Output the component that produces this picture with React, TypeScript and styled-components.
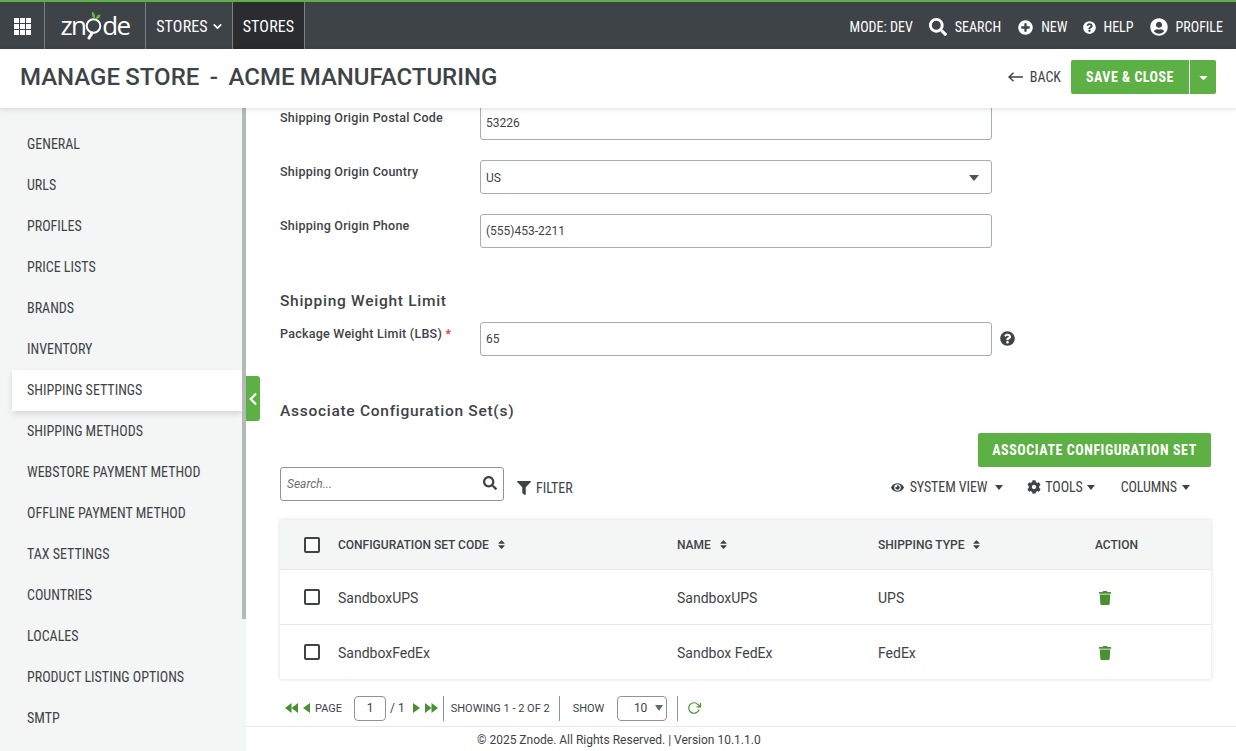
import React from "react";
import styled, { createGlobalStyle } from "styled-components";
import { FaSearch, FaPlusCircle, FaQuestionCircle, FaUserCircle, FaFilter, FaEye, FaCog, FaTrash, FaSort, FaChevronLeft, FaCaretDown } from "react-icons/fa";
import { FiChevronDown, FiRotateCw } from "react-icons/fi";

const Global = createGlobalStyle`
  html, body { margin: 0; padding: 0; height: 100%; background: #fff; }
  * { box-sizing: border-box; }
  body { font-family: Roboto, "Liberation Sans", sans-serif; color: #3e4347; }
`;

const Page = styled.div`display:flex;flex-direction:column;width:1236px;height:751px;overflow:hidden;position:relative;`;
const TopBar = styled.header`display:flex;align-items:stretch;height:49px;background:#3e4347;border-top:2px solid #5db043;color:#fff;flex:none;`;
const NavCell = styled.div<{ $w: number; $dark?: boolean; $pl?: number }>`
  width:${p => p.$w}px;display:flex;align-items:center;justify-content:center;gap:3px;padding:2px 0 0 ${p => p.$pl ?? 0}px;
  border-right:1px solid #7d8184;background:${p => (p.$dark ? "#2a2c30" : "transparent")};
  font-size:16px;
`;
const NavText = styled.span`font-stretch:75%;white-space:nowrap;`;
const NavLabel = styled(NavText)`letter-spacing:.15px;`;
const Logo = styled.div`display:flex;align-items:center;font-family:"Open Sans",sans-serif;font-weight:400;font-size:26px;letter-spacing:-1.6px;line-height:1;margin-top:-3px;`;
const TopRight = styled.div`margin-left:auto;display:flex;align-items:center;padding:3px 13px 0 0;font-size:14px;`;
const TopItem = styled.div<{ $gap: number; $ml: number }>`display:flex;align-items:center;gap:${p => p.$gap}px;margin-left:${p => p.$ml}px;`;

const TitleBar = styled.div`height:59px;flex:none;display:flex;align-items:center;padding:0 20px 3px;background:#fff;box-shadow:0 1px 5px rgba(0,0,0,.14);position:relative;z-index:2;`;
const Title = styled.h1`margin:0;font-size:24px;font-weight:500;color:#3e4347;word-spacing:-.7px;white-space:pre;`;
const TitleActions = styled.div`margin-left:auto;display:flex;align-items:center;`;
const Back = styled.div`display:flex;align-items:center;gap:7px;font-size:14px;color:#3e4347;margin-right:10px;`;
const SaveGroup = styled.div`display:flex;height:34px;background:#5db043;border-radius:2px;color:#fff;`;
const SaveMain = styled.div`width:119px;display:flex;align-items:center;justify-content:center;font-size:14px;font-weight:700;font-stretch:75%;letter-spacing:.5px;border-right:1px solid #fff;`;
const SaveCaret = styled.div`width:26px;display:flex;align-items:center;justify-content:center;font-size:13px;`;

const Body = styled.div`flex:1;display:flex;min-height:0;position:relative;`;
const Side = styled.nav`width:246px;flex:none;background:#f4f5f5;padding:16px 4px 0 12px;overflow:hidden;position:relative;`;
const SideThumb = styled.div`position:absolute;right:0;top:0;width:4px;height:511px;background:#b5b7b8;`;
const SideItem = styled.div<{ $active?: boolean }>`
  height:41px;display:flex;align-items:center;padding:0 0 1px 15px;font-size:14px;color:#3e4347;white-space:nowrap;
  ${p => p.$active ? "background:#fff;box-shadow:0 3px 6px rgba(0,0,0,.12);" : ""}
`;
const Toggle = styled.div`position:absolute;left:246px;top:268px;width:14px;height:45px;background:#5db043;border-radius:0 3px 3px 0;color:#fff;display:flex;align-items:center;justify-content:center;font-size:14px;z-index:3;`;

const MainCol = styled.main`flex:1;min-width:0;display:flex;flex-direction:column;`;
const Scroll = styled.div`flex:1;min-height:0;overflow:hidden;padding:0 25px 0 34px;`;
const Content = styled.div`margin-top:-2px;`;
const Row = styled.div`display:flex;height:34px;margin-bottom:20px;align-items:flex-start;`;
const Label = styled.label`width:200px;flex:none;font-size:12.5px;font-weight:500;letter-spacing:.25px;color:#3e4347;padding-top:4px;line-height:16px;`;
const Req = styled.span`color:#e53935;`;
const Field = styled.div<{ $select?: boolean }>`width:512px;height:34px;border:1px solid #a9adb0;border-radius:3px;font-size:12px;display:flex;align-items:center;padding:${p => (p.$select ? "1px" : "0")} 5px 0;color:#3e4347;background:#fff;position:relative;`;
const Caret = styled.span`margin-left:auto;margin-right:7px;width:0;height:0;border-left:5px solid transparent;border-right:5px solid transparent;border-top:6px solid #4d5357;`;
const Help = styled.div`margin:9px 0 0 8px;font-size:15px;color:#3e4347;line-height:0;`;
const Section = styled.h2<{ $mt: number; $mb: number }>`margin:${p => p.$mt}px 0 ${p => p.$mb}px;font-size:15.5px;font-weight:500;letter-spacing:.72px;line-height:18px;padding-top:1px;height:18px;color:#3e4347;`;
const RightBtnRow = styled.div`display:flex;justify-content:flex-end;`;
const GreenBtn = styled.div`width:233px;height:34px;background:#5db043;color:#fff;border-radius:2px;display:flex;align-items:center;justify-content:center;font-size:14px;font-weight:700;font-stretch:75%;letter-spacing:.55px;`;
const Toolbar = styled.div`display:flex;height:34px;align-items:center;margin-bottom:19px;`;
const SearchBox = styled.div`width:224px;height:34px;border:1px solid #8f9396;border-radius:3px;display:flex;align-items:center;padding:0 6px;font-size:12px;font-style:italic;color:#6c7175;justify-content:space-between;`;
const SearchIcon = styled.span`font-size:14px;color:#3e4347;line-height:0;font-style:normal;margin-top:-2px;`;
const FilterBtn = styled.div`display:flex;align-items:center;gap:5px;margin-left:13px;font-size:14px;color:#3e4347;padding-top:7px;`;
const ToolRight = styled.div`margin-left:auto;display:flex;align-items:center;font-size:14px;letter-spacing:-.1px;color:#3e4347;margin-right:21px;padding-top:6px;`;
const ToolItem = styled.div<{ $ml: number; $gap: number }>`display:flex;align-items:center;gap:${p => p.$gap}px;margin-left:${p => p.$ml}px;`;
const ToolCaret = styled.span<{ $ml?: number }>`width:0;height:0;margin-left:${p => p.$ml ?? 0}px;border-left:4px solid transparent;border-right:4px solid transparent;border-top:5px solid #3e4347;`;

const Table = styled.div`width:931px;box-shadow:0 0 4px rgba(0,0,0,.16);background:#fff;`;
const Grid = styled.div<{ $head?: boolean }>`
  display:grid;grid-template-columns:58px 339px 201px 217px 116px;align-items:center;
  height:${p => (p.$head ? 49 : 55)}px;
  ${p => p.$head ? "background:#f4f5f5;font-size:12px;font-weight:500;" : "font-size:14px;border-top:1px solid #e7e8e8;"}
  color:#3e4347;
`;
const CheckCell = styled.div`display:flex;padding-left:24px;`;
const Check = styled.div`width:16px;height:16px;border:2px solid #3e4347;border-radius:2px;background:#fff;`;
const HeadCell = styled.div`display:flex;align-items:center;gap:7px;`;
const BodyCell = styled.div`padding-top:2px;`;
const SortIcon = styled.span`font-size:11px;line-height:0;`;
const TrashBtn = styled.div`padding:2px 0 0 3px;color:#4b8f33;font-size:14px;line-height:0;`;

const Pager = styled.div`display:flex;align-items:center;height:34px;margin-top:12px;padding-left:5px;font-size:11px;color:#3e4347;`;
const PagerArrow = styled.svg`display:block;`;
const PagerGap = styled.span<{ $w: number }>`width:${p => p.$w}px;`;
const PageLabel = styled.span`margin:1px 12px 0 5px;`;
const PageInput = styled.div`width:32px;height:25px;border:1px solid #8f9396;border-radius:4px;display:flex;align-items:center;justify-content:center;font-size:12px;`;
const Slash = styled.span`margin:0 8px 0 4px;font-size:12px;`;
const PagerSep = styled.span<{ $ml?: number; $mr?: number }>`width:1px;height:25px;background:#8f9396;margin:0 ${p => p.$mr ?? 7}px 0 ${p => p.$ml ?? 5}px;`;
const SelectBox = styled.div`width:50px;height:25px;border:1px solid #8f9396;border-radius:4px;display:flex;align-items:center;justify-content:flex-end;padding-right:3px;gap:8px;font-size:12px;`;
const SmallCaret = styled.span`width:0;height:0;border-left:4.5px solid transparent;border-right:4.5px solid transparent;border-top:6px solid #5f6a75;`;
const Refresh = styled.span`color:#4b8f33;font-size:14px;line-height:0;`;
const Footer = styled.footer`height:25px;flex:none;border-top:1px solid #e8e9e9;font-size:12px;color:#3e4347;padding:6px 0 0 231px;line-height:15px;white-space:nowrap;`;

const items = ["GENERAL","URLS","PROFILES","PRICE LISTS","BRANDS","INVENTORY","SHIPPING SETTINGS","SHIPPING METHODS","WEBSTORE PAYMENT METHOD","OFFLINE PAYMENT METHOD","TAX SETTINGS","COUNTRIES","LOCALES","PRODUCT LISTING OPTIONS","SMTP"];

const Tri = ({ dir, double }: { dir: "l" | "r"; double?: boolean }) => (
  <PagerArrow width={double ? 13 : 7} height="10" viewBox={double ? "0 0 13 10" : "0 0 7 10"} fill="#4b8f33">
    {dir === "l" ? (
      double ? <path d="M6.5 0v10L0 5zM13 0v10L6.5 5z" /> : <path d="M7 0v10L0 5z" />
    ) : (
      double ? <path d="M0 0v10l6.5-5zM6.5 0v10L13 5z" /> : <path d="M0 0v10l7-5z" />
    )}
  </PagerArrow>
);

const rows = [["SandboxUPS","SandboxUPS","UPS"],["SandboxFedEx","Sandbox FedEx","FedEx"]];

export default function App() {
  return (
    <Page>
      <Global />
      <TopBar>
        <NavCell $w={45}>
          <svg width="17" height="17" viewBox="0 0 17 17" fill="#fff">
            {[0,6,12].flatMap(y => [0,6,12].map(x => <rect key={`${x}-${y}`} x={x} y={y} width="5" height="5" />))}
          </svg>
        </NavCell>
        <NavCell $w={101}>
          <Logo>zn
            <svg width="17" height="30" viewBox="0 0 17 30">
              <circle cx="8.500" cy="16" r="6.800" fill="none" stroke="#fff" strokeWidth="2" />
              <path d="M7 23c-1 2-2 3-3 5" stroke="#fff" strokeWidth="3" fill="none" strokeLinecap="round" />
              <path d="M9 8.500C7 7 6.500 5 7 1.500c2.500 1 3.500 3.500 3 6.500zM11 8.500c0-2.500 1.500-4 4.500-4 0 2.500-1.500 4.500-4.500 4.500z" fill="#63b345" />
            </svg>
            de
          </Logo>
        </NavCell>
        <NavCell $w={87} $pl={2}><NavLabel>STORES</NavLabel><FiChevronDown size={13} strokeWidth={3} /></NavCell>
        <NavCell $w={72} $dark><NavLabel>STORES</NavLabel></NavCell>
        <TopRight>
          <TopItem $gap={0} $ml={0}><NavText>MODE: DEV</NavText></TopItem>
          <TopItem $gap={8} $ml={16}><FaSearch size={18} /><NavText>SEARCH</NavText></TopItem>
          <TopItem $gap={8} $ml={17}><FaPlusCircle size={15} /><NavText>NEW</NavText></TopItem>
          <TopItem $gap={7} $ml={16}><FaQuestionCircle size={13} /><NavText>HELP</NavText></TopItem>
          <TopItem $gap={8} $ml={16}><FaUserCircle size={18} /><NavText>PROFILE</NavText></TopItem>
        </TopRight>
      </TopBar>
      <TitleBar>
        <Title>{"MANAGE STORE  -  ACME MANUFACTURING"}</Title>
        <TitleActions>
          <Back>
            <svg width="15" height="10" viewBox="0 0 15 10" fill="none" stroke="#3e4347" strokeWidth="1.4">
              <path d="M15 5H1M5.500.7 1 5l4.500 4.300" />
            </svg>
            <NavText>BACK</NavText>
          </Back>
          <SaveGroup>
            <SaveMain>SAVE &amp; CLOSE</SaveMain>
            <SaveCaret><FaCaretDown /></SaveCaret>
          </SaveGroup>
        </TitleActions>
      </TitleBar>
      <Body>
        <Side>
          <SideThumb />
          {items.map(i => <SideItem key={i} $active={i === "SHIPPING SETTINGS"}><NavText>{i}</NavText></SideItem>)}
        </Side>
        <Toggle><FaChevronLeft /></Toggle>
        <MainCol>
          <Scroll>
            <Content>
              <Row><Label>Shipping Origin Postal Code</Label><Field>53226</Field></Row>
              <Row><Label>Shipping Origin Country</Label><Field $select>US<Caret /></Field></Row>
              <Row><Label>Shipping Origin Phone</Label><Field>(555)453-2211</Field></Row>
              <Section $mt={43} $mb={13}>Shipping Weight Limit</Section>
              <Row>
                <Label>Package Weight Limit (LBS) <Req>*</Req></Label>
                <Field>65</Field>
                <Help><FaQuestionCircle /></Help>
              </Row>
              <Section $mt={45} $mb={14}>Associate Configuration Set(s)</Section>
              <RightBtnRow><GreenBtn>ASSOCIATE CONFIGURATION SET</GreenBtn></RightBtnRow>
              <Toolbar>
                <SearchBox>Search...<SearchIcon><FaSearch /></SearchIcon></SearchBox>
                <FilterBtn><FaFilter size={14} /><NavText>FILTER</NavText></FilterBtn>
                <ToolRight>
                  <ToolItem $ml={0} $gap={6}><FaEye size={13} /><NavText>SYSTEM VIEW</NavText><ToolCaret $ml={2} /></ToolItem>
                  <ToolItem $ml={24} $gap={4}><FaCog size={14} /><NavText>TOOLS</NavText></ToolItem>
                  <ToolCaret $ml={4} />
                  <ToolItem $ml={26} $gap={5}><NavText>COLUMNS</NavText><ToolCaret /></ToolItem>
                </ToolRight>
              </Toolbar>
              <Table>
                <Grid $head>
                  <CheckCell><Check /></CheckCell>
                  <HeadCell>CONFIGURATION SET CODE<SortIcon><FaSort /></SortIcon></HeadCell>
                  <HeadCell>NAME<SortIcon><FaSort /></SortIcon></HeadCell>
                  <HeadCell>SHIPPING TYPE<SortIcon><FaSort /></SortIcon></HeadCell>
                  <HeadCell>ACTION</HeadCell>
                </Grid>
                {rows.map(r => (
                  <Grid key={r[0]}>
                    <CheckCell><Check /></CheckCell>
                    <BodyCell>{r[0]}</BodyCell><BodyCell>{r[1]}</BodyCell><BodyCell>{r[2]}</BodyCell>
                    <TrashBtn><FaTrash /></TrashBtn>
                  </Grid>
                ))}
              </Table>
              <Pager>
                <Tri dir="l" double /><PagerGap $w={5} /><Tri dir="l" />
                <PageLabel>PAGE</PageLabel>
                <PageInput>1</PageInput>
                <Slash>/ 1</Slash>
                <Tri dir="r" /><PagerGap $w={5} /><Tri dir="r" double />
                <PagerSep />
                <span>SHOWING 1 - 2 OF 2</span>
                <PagerSep $ml={9} $mr={13} />
                <span>SHOW</span>
                <PagerGap $w={13} />
                <SelectBox>10<SmallCaret /></SelectBox>
                <PagerSep $ml={10} $mr={9} />
                <Refresh><FiRotateCw /></Refresh>
              </Pager>
            </Content>
          </Scroll>
          <Footer>© 2025 Znode. All Rights Reserved. | Version 10.1.1.0</Footer>
        </MainCol>
      </Body>
    </Page>
  );
}
